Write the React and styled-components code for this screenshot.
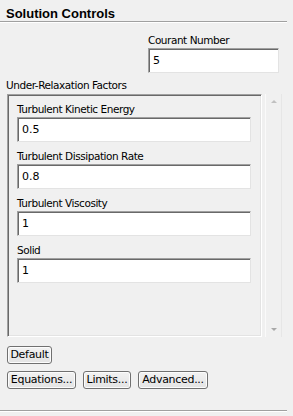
import React from "react";
import styled, { createGlobalStyle } from "styled-components";

const Global = createGlobalStyle`
  html, body { margin: 0; padding: 0; background: #f0f0f0; }
  body { font-family: "DejaVu Sans", "Liberation Sans", sans-serif; font-size: 11px; color: #000; }
`;

const Page = styled.div`
  width: 293px;
  height: 416px;
  background: #f0f0f0;
  display: flex;
  flex-direction: column;
  overflow: hidden;
`;

const Title = styled.div`
  font-family: "Liberation Sans", Arial, sans-serif;
  font-weight: bold;
  font-size: 13px;
  padding: 6px 0 0 6px;
  height: 15px;
  line-height: 15px;
`;

const Rule = styled.div`
  width: 287px;
  height: 1px;
  background: #a0a0a0;
  border-bottom: 1px solid #fff;
  margin-top: ${(p) => p.$top || 0}px;
`;

const Label = styled.div`
  font-family: "DejaVu Sans", sans-serif;
  font-size: 10.5px;
  letter-spacing: -0.45px;
  height: 14px;
  line-height: 14px;
`;

const Field = styled.div`
  box-sizing: border-box;
  width: ${(p) => p.$w}px;
  height: 25px;
  background: #fff;
  border-top: 1px solid #a0a0a0;
  border-left: 1px solid #a0a0a0;
  border-right: 1px solid #e3e3e3;
  border-bottom: 1px solid #e3e3e3;
  box-shadow: inset 1px 1px 0 #696969;
  font-family: "DejaVu Sans", sans-serif;
  font-size: 11px;
  padding: 5px 0 0 4px;
  line-height: 14px;
`;

const CourantGroup = styled.div`
  align-self: flex-start;
  margin: 10px 0 0 148px;
  display: flex;
  flex-direction: column;
  gap: 1px;
`;

const URLabel = styled(Label)`
  margin-top: 5px;
  padding-left: 6px;
`;

const PanelRow = styled.div`
  display: flex;
  margin-top: 2px;
  margin-left: 7px;
  gap: 3px;
`;

const Panel = styled.div`
  box-sizing: border-box;
  width: 255px;
  height: 243px;
  border-top: 1px solid #a0a0a0;
  border-left: 1px solid #a0a0a0;
  border-right: 1px solid #fff;
  border-bottom: 1px solid #fff;
  box-shadow: inset 1px 1px 0 #696969, inset -1px -1px 0 #e3e3e3;
  padding: 7px 0 0 9px;
  display: flex;
  flex-direction: column;
  gap: 7px;
`;

const Group = styled.div`
  display: flex;
  flex-direction: column;
  gap: 1px;
`;

const Scroll = styled.div`
  box-sizing: border-box;
  width: 17px;
  height: 243px;
  border-left: 1px solid #fafafa;
  border-right: 1px solid #e6e6e6;
  display: flex;
  flex-direction: column;
  justify-content: space-between;
  align-items: center;
  padding: 6px 0;
`;

const Arrow = styled.div`
  width: 0;
  height: 0;
  border-left: 3px solid transparent;
  border-right: 3px solid transparent;
  ${(p) =>
    p.$down
      ? "border-top: 3px solid #a8a8a8;"
      : "border-bottom: 3px solid #c0c0c0;"}
`;

const Buttons = styled.div`
  display: flex;
  gap: 7px;
  margin-left: 7px;
  margin-top: ${(p) => p.$top}px;
`;

const Button = styled.button`
  box-sizing: border-box;
  height: 18px;
  width: ${(p) => p.$w}px;
  padding: 0;
  margin: 0;
  background: linear-gradient(#f2f2f2, #e3e3e3);
  border: 1px solid #707070;
  border-radius: 3px;
  box-shadow: inset 0 0 0 1px #fcfcfc;
  font-family: "DejaVu Sans", sans-serif;
  font-size: 11px;
  letter-spacing: -0.3px;
  color: #000;
  line-height: 14px;
`;

const fields = [
  ["Turbulent Kinetic Energy", "0.5"],
  ["Turbulent Dissipation Rate", "0.8"],
  ["Turbulent Viscosity", "1"],
  ["Solid", "1"],
];

export default function App() {
  return (
    <Page>
      <Global />
      <Title>Solution Controls</Title>
      <Rule $top={0} />
      <CourantGroup>
        <Label>Courant Number</Label>
        <Field $w={131}>5</Field>
      </CourantGroup>
      <URLabel>Under-Relaxation Factors</URLabel>
      <PanelRow>
        <Panel>
          {fields.map(([l, v]) => (
            <Group key={l}>
              <Label>{l}</Label>
              <Field $w={234}>{v}</Field>
            </Group>
          ))}
        </Panel>
        <Scroll>
          <Arrow />
          <Arrow $down />
        </Scroll>
      </PanelRow>
      <Buttons $top={9}>
        <Button $w={45}>Default</Button>
      </Buttons>
      <Buttons $top={7}>
        <Button $w={69}>Equations...</Button>
        <Button $w={48}>Limits...</Button>
        <Button $w={70}>Advanced...</Button>
      </Buttons>
      <Rule $top={21} />
    </Page>
  );
}
